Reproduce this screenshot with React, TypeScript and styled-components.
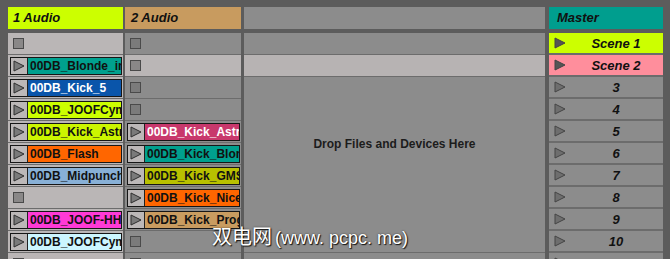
import React from "react";
import styled, { createGlobalStyle } from "styled-components";

const Global = createGlobalStyle`
  html, body { margin: 0; padding: 0; background: #5c5c5c; }
  #root { width: 670px; height: 259px; overflow: hidden; }
`;

const Frame = styled.div`
  position: relative;
  width: 670px;
  height: 259px;
  overflow: hidden;
  background: #5c5c5c;
  box-sizing: border-box;
  padding: 7px 0 0 8px;
  display: flex;
  align-items: flex-start;
  font-family: "Liberation Sans", Arial, sans-serif;
`;

const Column = styled.div<{ $w: number; $mr: number }>`
  width: ${(p) => p.$w}px;
  margin-right: ${(p) => p.$mr}px;
  display: flex;
  flex-direction: column;
  flex-shrink: 0;
`;

const Header = styled.div<{ $bg: string; $pl: number }>`
  height: 22px;
  flex-shrink: 0;
  background: ${(p) => p.$bg};
  margin-bottom: 4px;
  display: flex;
  align-items: center;
  padding-left: ${(p) => p.$pl}px;
  padding-bottom: 1px;
  box-sizing: border-box;
  font-size: 13px;
  font-weight: bold;
  font-style: italic;
  color: #111;
`;

const SlotList = styled.div<{ $gap: number }>`
  display: flex;
  flex-direction: column;
  flex-shrink: 0;
  gap: ${(p) => p.$gap}px;
  background: #6c6c6c;
`;

const Slot = styled.div<{ $light: boolean }>`
  height: 21px;
  flex-shrink: 0;
  background: ${(p) => (p.$light ? "#bab6b6" : "#8c8c8c")};
  display: flex;
  align-items: flex-start;
  padding: 0 1px 0 2px;
  box-sizing: border-box;
`;

const StopSquare = styled.div<{ $light: boolean }>`
  width: 11px;
  height: 11px;
  box-sizing: border-box;
  margin: 5px 0 0 3px;
  background: ${(p) => (p.$light ? "#8a8888" : "#7b7b7b")};
  border: 1px solid #4a4a4a;
`;

const Clip = styled.div`
  margin-top: 2px;
  height: 18px;
  flex: 1;
  min-width: 0;
  display: flex;
  border: 1px solid #161616;
  box-sizing: border-box;
`;

const PlayArea = styled.div`
  width: 17px;
  flex-shrink: 0;
  background: #bcb8b8;
  border-right: 1px solid #222;
  display: flex;
  align-items: center;
  padding-left: 2px;
  box-sizing: border-box;
`;

const ClipName = styled.div<{ $bg: string; $fg: string }>`
  flex: 1;
  min-width: 0;
  background: ${(p) => p.$bg};
  color: ${(p) => p.$fg};
  font-size: 12px;
  font-weight: bold;
  line-height: 16px;
  padding-left: 2px;
  white-space: nowrap;
  overflow: hidden;
`;

const DropSlot = styled.div<{ $light: boolean }>`
  height: 21px;
  flex-shrink: 0;
  background: ${(p) => (p.$light ? "#b7b3b3" : "#8c8c8c")};
`;

const DropArea = styled.div`
  height: 175px;
  flex-shrink: 0;
  background: #8c8c8c;
  padding-top: 60px;
  box-sizing: border-box;
  text-align: center;
  font-size: 12px;
  font-weight: bold;
  line-height: 14px;
  color: #1c1c1c;
`;

const Scene = styled.div<{ $bg: string }>`
  height: 20px;
  flex-shrink: 0;
  background: ${(p) => p.$bg};
  display: flex;
  align-items: center;
`;

const SceneTri = styled.div`
  width: 20px;
  flex-shrink: 0;
  display: flex;
  align-items: center;
  padding-left: 5px;
  box-sizing: border-box;
`;

const SceneLabel = styled.div`
  flex: 1;
  text-align: center;
  font-size: 13px;
  font-weight: bold;
  font-style: italic;
  color: #111;
`;

const Watermark = styled.div`
  position: absolute;
  left: 212px;
  top: 221px;
  color: #ffffff;
  white-space: nowrap;
  text-shadow: 1px 1px 1px rgba(0, 0, 0, 0.85), 0 0 2px rgba(0, 0, 0, 0.6);
  display: flex;
  align-items: baseline;
`;

const WmCjk = styled.span`
  font-family: "Noto Sans CJK SC", sans-serif;
  font-size: 20px;
`;

const WmLatin = styled.span`
  font-family: "Liberation Sans", Arial, sans-serif;
  font-size: 18px;
  margin-left: 3px;
`;

const Tri = ({ fill, stroke }: { fill: string; stroke: string }) => (
  <svg width="12" height="12" viewBox="0 0 12 12">
    <polygon points="1,1 11,6 1,11" fill={fill} stroke={stroke} strokeWidth="1" strokeLinejoin="miter" />
  </svg>
);

type SlotData = null | { name: string; bg: string; fg?: string };

const track1: SlotData[] = [
  null,
  { name: "00DB_Blonde_intro", bg: "#00a08e" },
  { name: "00DB_Kick_5", bg: "#0a55aa", fg: "#ffffff" },
  { name: "00DB_JOOFCymbal", bg: "#ccff00" },
  { name: "00DB_Kick_Astral", bg: "#ccf500" },
  { name: "00DB_Flash", bg: "#ff6600" },
  { name: "00DB_Midpunch", bg: "#88b0d6" },
  null,
  { name: "00DB_JOOF-HH", bg: "#ff3ad6" },
  { name: "00DB_JOOFCymbal", bg: "#ccf6ff" },
  null,
];

const track2: SlotData[] = [
  null,
  null,
  null,
  null,
  { name: "00DB_Kick_Astral", bg: "#c8386c", fg: "#ffffff" },
  { name: "00DB_Kick_Blonde", bg: "#00a08e" },
  { name: "00DB_Kick_GMS", bg: "#b8c000" },
  { name: "00DB_Kick_Nice", bg: "#ff6600" },
  { name: "00DB_Kick_Prog", bg: "#c99c60" },
  null,
  null,
];

const scenes = [
  { label: "Scene 1", bg: "#ccff00" },
  { label: "Scene 2", bg: "#ff8e9c" },
  ...["3", "4", "5", "6", "7", "8", "9", "10", ""].map((l) => ({ label: l, bg: "#8c8c8c" })),
];

const TrackSlots = ({ slots, lightAll }: { slots: SlotData[]; lightAll: boolean }) => (
  <SlotList $gap={1}>
    {slots.map((s, i) => {
      const light = lightAll || i === 1;
      return (
        <Slot key={i} $light={light}>
          {s ? (
            <Clip>
              <PlayArea>
                <Tri fill="#7a7a7a" stroke="#2e2e2e" />
              </PlayArea>
              <ClipName $bg={s.bg} $fg={s.fg ?? "#111"}>
                {s.name}
              </ClipName>
            </Clip>
          ) : (
            <StopSquare $light={light} />
          )}
        </Slot>
      );
    })}
  </SlotList>
);

export default function App() {
  return (
    <>
      <Global />
      <Frame>
        <Column $w={115} $mr={2}>
          <Header $bg="#ccff00" $pl={5}>1 Audio</Header>
          <TrackSlots slots={track1} lightAll={true} />
        </Column>
        <Column $w={116} $mr={3}>
          <Header $bg="#c89b5f" $pl={6}>2 Audio</Header>
          <TrackSlots slots={track2} lightAll={false} />
        </Column>
        <Column $w={301} $mr={4}>
          <Header $bg="#8c8c8c" $pl={5} />
          <SlotList $gap={1}>
            <DropSlot $light={false} />
            <DropSlot $light={true} />
            <DropArea>Drop Files and Devices Here</DropArea>
            <DropSlot $light={false} />
          </SlotList>
        </Column>
        <Column $w={114} $mr={0}>
          <Header $bg="#009e8e" $pl={8}>Master</Header>
          <SlotList $gap={2}>
            {scenes.map((s, i) => (
              <Scene key={i} $bg={s.bg}>
                <SceneTri>
                  <Tri fill={i < 2 ? "#555" : "#6e6e6e"} stroke="#444" />
                </SceneTri>
                <SceneLabel>{s.label}</SceneLabel>
              </Scene>
            ))}
          </SlotList>
        </Column>
        <Watermark>
          <WmCjk>双电网</WmCjk>
          <WmLatin>(www. pcpc. me)</WmLatin>
        </Watermark>
      </Frame>
    </>
  );
}
